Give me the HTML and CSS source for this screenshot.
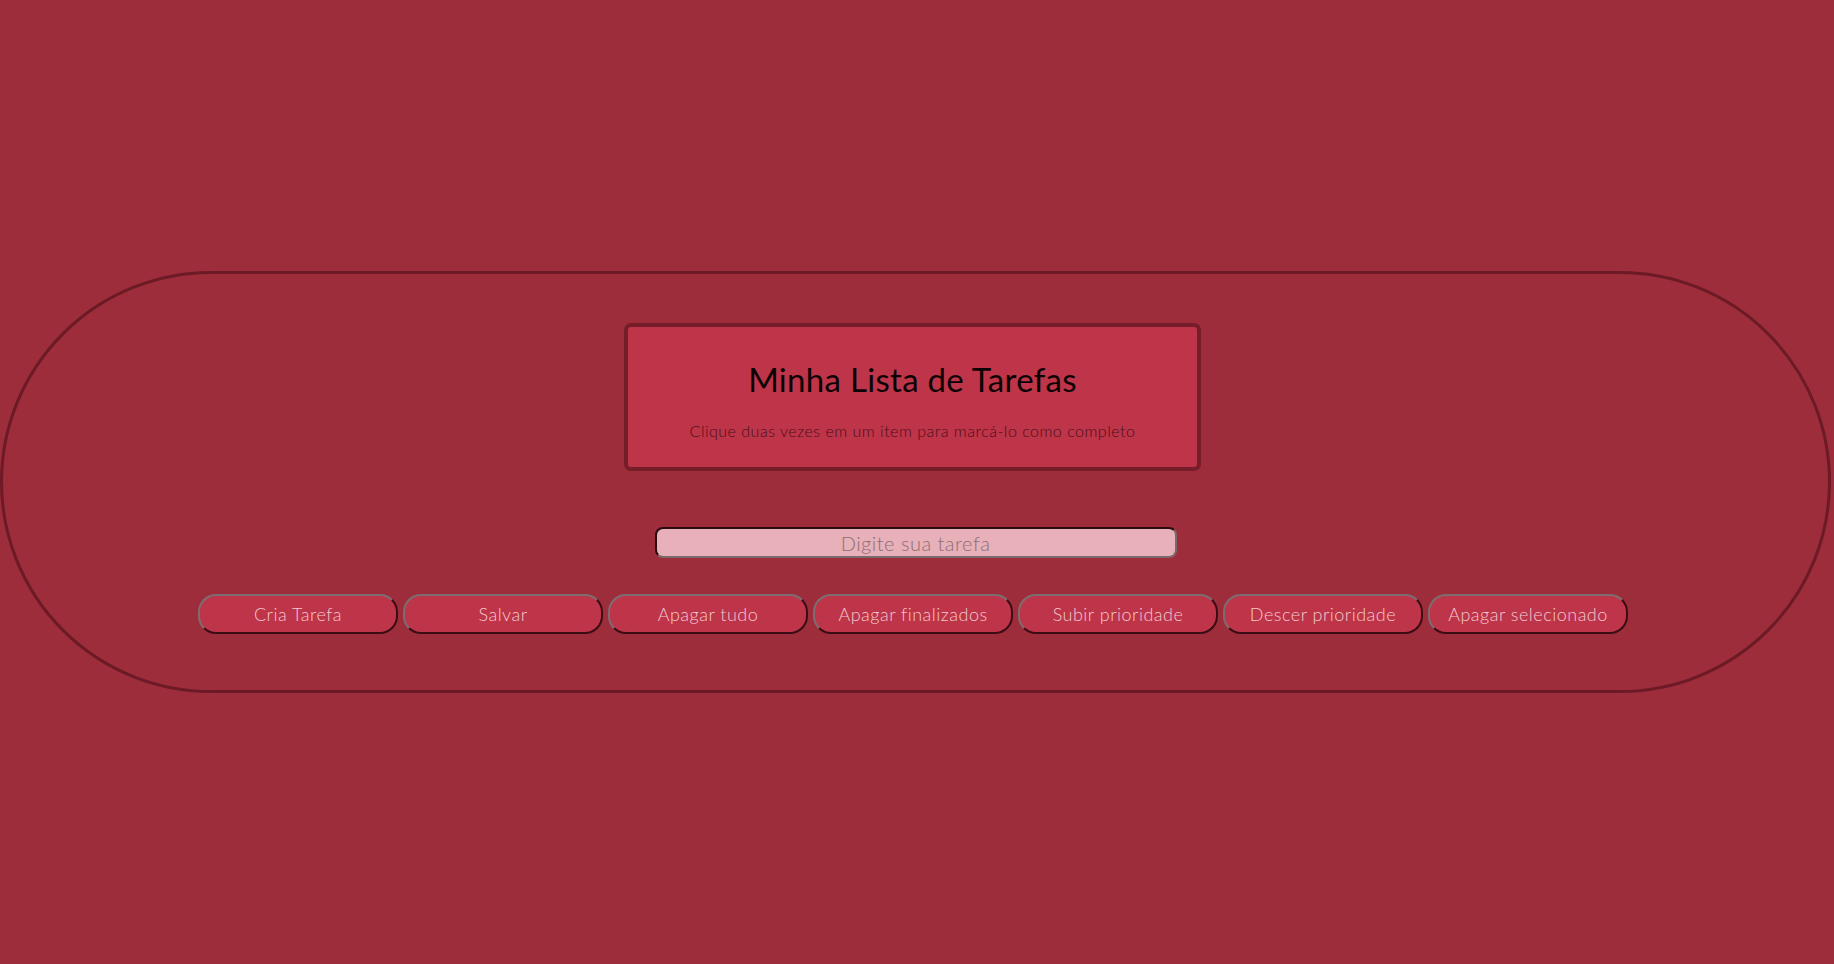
FILE: index.html
```html
<!DOCTYPE html>
<html lang="pt-BR">
<head>
<meta charset="utf-8">
<title>Minha Lista de Tarefas</title>
<link rel="stylesheet" href="styles.css">
</head>
<body>
<main class="shell">
  <header class="card">
    <h1 class="title">Minha Lista de Tarefas</h1>
    <p class="hint">Clique duas vezes em um item para marcá-lo como completo</p>
  </header>
  <input class="task-input" type="text" placeholder="Digite sua tarefa">
  <div class="actions">
    <button class="btn">Cria Tarefa</button>
    <button class="btn">Salvar</button>
    <button class="btn">Apagar tudo</button>
    <button class="btn">Apagar finalizados</button>
    <button class="btn">Subir prioridade</button>
    <button class="btn">Descer prioridade</button>
    <button class="btn">Apagar selecionado</button>
  </div>
</main>
</body>
</html>
```
FILE: styles.css
```css
* { box-sizing: border-box; }

html, body {
  margin: 0;
  padding: 0;
}

body {
  background: #9e2d3c;
  min-height: 100vh;
  display: flex;
  align-items: center;
  font-family: "Lato", "Noto Sans", sans-serif;
}

.shell {
  width: 1831px;
  height: 422px;
  border: 3px solid #6c1a25;
  border-radius: 211px;
  display: flex;
  flex-direction: column;
  align-items: center;
  padding-top: 49px;
}

.card {
  width: 577px;
  height: 148px;
  margin-left: -6px;
  background: #be3449;
  border: 4px solid #761d2a;
  border-radius: 7px;
  text-align: center;
  padding-top: 32px;
}

.title {
  margin: 0;
  font-size: 33px;
  line-height: 40px;
  font-weight: 400;
  letter-spacing: 0.3px;
  color: #0c0204;
}

.hint {
  margin: 22px 0 0;
  font-size: 16px;
  line-height: 20px;
  font-weight: 300;
  letter-spacing: 0.5px;
  color: #4a0f18;
}

.task-input {
  margin-top: 56px;
  width: 522px;
  height: 31px;
  background: #e8b0b8;
  border: 2px solid;
  border-color: #2a0a0f #7a6a6c #7a6a6c #2a0a0f;
  border-radius: 8px;
  font-family: "Lato", "Noto Sans", sans-serif;
  font-size: 20px;
  font-weight: 300;
  letter-spacing: 0.5px;
  text-align: center;
  color: #3a1a1f;
  padding: 0 8px;
  outline: none;
}

.task-input::placeholder {
  color: #8d6f75;
}

.actions {
  margin-top: 36px;
  margin-left: -5px;
  display: flex;
  gap: 5px;
}

.btn {
  width: 200px;
  height: 40px;
  background: #be3449;
  border: 2px solid;
  border-color: #7d6d70 #3a0c13 #3a0c13 #7d6d70;
  border-radius: 18px;
  color: #f4c9cf;
  font-family: "Lato", "Noto Sans", sans-serif;
  font-size: 18px;
  font-weight: 300;
  letter-spacing: 0.5px;
  padding: 0;
  cursor: pointer;
}
```
